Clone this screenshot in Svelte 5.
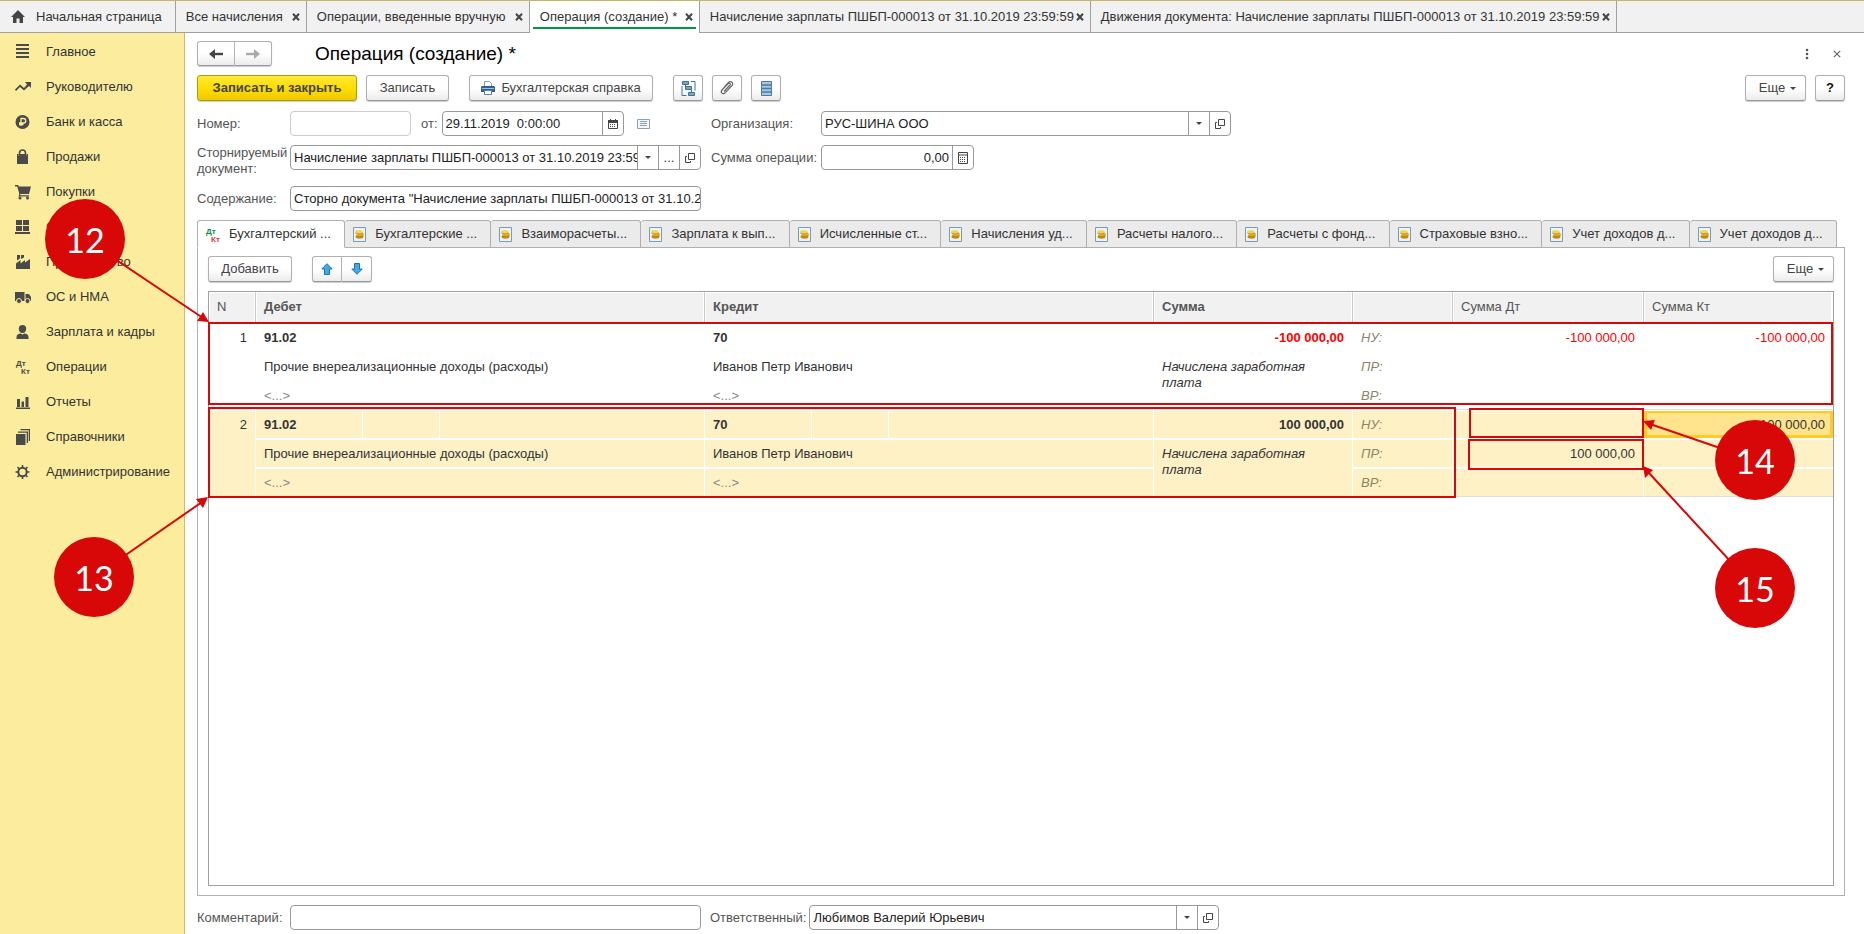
<script>
  const openTabs = [
    { title: 'Все начисления', width: 131 },
    { title: 'Операции, введенные вручную', width: 223 },
    { title: 'Операция (создание) *', width: 170, active: true },
    { title: 'Начисление зарплаты ПШБП-000013 от 31.10.2019 23:59:59', width: 391 },
    { title: 'Движения документа: Начисление зарплаты ПШБП-000013 от 31.10.2019 23:59:59', width: 526 },
  ];

  const sections = [
    { icon: 'menu', title: 'Главное' },
    { icon: 'trend', title: 'Руководителю' },
    { icon: 'ruble', title: 'Банк и касса' },
    { icon: 'bag', title: 'Продажи' },
    { icon: 'cart', title: 'Покупки' },
    { icon: 'boxes', title: 'Склад' },
    { icon: 'factory', title: 'Производство' },
    { icon: 'truck', title: 'ОС и НМА' },
    { icon: 'person', title: 'Зарплата и кадры' },
    { icon: 'dtkt', title: 'Операции' },
    { icon: 'chart', title: 'Отчеты' },
    { icon: 'books', title: 'Справочники' },
    { icon: 'gear', title: 'Администрирование' },
  ];

  const registers = [
    'Бухгалтерские ...',
    'Взаиморасчеты...',
    'Зарплата к вып...',
    'Исчисленные ст...',
    'Начисления уд...',
    'Расчеты налого...',
    'Расчеты с фонд...',
    'Страховые взно...',
    'Учет доходов д...',
    'Учет доходов д...',
  ];

  const entries = [
    {
      n: 1, debit: '91.02', credit: '70', sum: '-100 000,00', negative: true,
      nuDt: '-100 000,00', nuKt: '-100 000,00', prDt: '',
    },
    {
      n: 2, debit: '91.02', credit: '70', sum: '100 000,00', selected: true,
      nuDt: '', nuKt: '100 000,00', prDt: '100 000,00',
    },
  ];
</script>

{#snippet sectionIcon(name)}
  <svg class="section-icon" width="18" height="16" viewBox="0 0 18 16" aria-hidden="true">
    {#if name === 'menu'}
      <path d="M2 0h13v2H2zM2 4h13v2H2zM2 8h13v2H2zM2 12h13v2H2z" />
    {:else if name === 'trend'}
      <path d="M11 3h6v6l-2-2-5 4.500-4-3.500-4 4-1-1.500 5-5 4 3.500 3-3.500z" />
    {:else if name === 'ruble'}
      <circle cx="8.500" cy="8" r="7" />
      <path class="cut" d="M7 12V4.500h2.500a2.200 2.200 0 0 1 0 4.500H5M5 10.500h4.500" />
    {:else if name === 'bag'}
      <path d="M3 5h1.500v2H6V5h5v2h1.500V5H14v10H3z" />
      <path class="line" d="M5.500 7V4a3 3 0 0 1 6 0v3" />
    {:else if name === 'cart'}
      <path d="M1 1h3.200l.6 1.500H17L15 10H6.500l-.3 1.200H15v1.300H4.500L5.300 10 3.300 2.500H1z" />
      <circle cx="6" cy="14" r="1.500" /><circle cx="13.500" cy="14" r="1.500" />
    {:else if name === 'boxes'}
      <path d="M2 1h6v5H2zM9 1h6v5H9zM2 7h6v5H2zM9 7h6v5H9zM1 13h15v2H1z" />
    {:else if name === 'factory'}
      <path d="M2 15V9.500L6.500 6v3.500L11 6v2.500L16 5v10zM3 1h3v3.500L3 6.500zM7 1h3v2.500L7 5z" />
    {:else if name === 'truck'}
      <path d="M1 3h9.500v9H1zM11.500 5h3.500l2 3v4h-5.500z" />
      <circle cx="5" cy="12" r="2.500" class="wheel" /><circle cx="13.500" cy="12" r="2.500" class="wheel" />
    {:else if name === 'person'}
      <path d="M8.500 1a3.700 3.700 0 0 1 3.700 3.700c0 2-1.200 4.300-3.700 4.300S4.800 6.700 4.800 4.700A3.700 3.700 0 0 1 8.500 1zM2.500 15v-2c0-2 2-3.500 4-3.500l2 1 2-1c2 0 4 1.500 4 3.500v2z" />
    {:else if name === 'dtkt'}
      <text x="2" y="7">Дт</text><text x="7" y="15">Кт</text>
    {:else if name === 'chart'}
      <path d="M3 5h3v8H3zM7.500 7.500h2.500V13H7.500zM11.500 3h3v10h-3zM2 13.500h14V15H2z" />
    {:else if name === 'books'}
      <path d="M2 5h9.500v11H2zM4 2.500h10V14h-1.300V3.800H4zM6.500 0H16v12h-1.300V1.200H6.500z" />
    {:else}
      <circle cx="8.500" cy="8" r="4.200" class="ring" />
      <path class="line" d="M8.500 1v3M8.500 12v3M1.500 8h3M12.500 8h3M3.500 3l2.200 2.200M11.300 10.800l2.200 2.200M3.500 13l2.200-2.200M11.300 5.200L13.500 3" />
    {/if}
  </svg>
{/snippet}

{#snippet openIcon()}
  <svg width="10" height="10" viewBox="0 0 10 10" aria-hidden="true">
    <path fill="none" stroke="#444" d="M3.500.5h6v6h-6zM2 3.500H.5v6h5V8" />
  </svg>
{/snippet}

{#snippet registerIcon()}
  <svg width="13" height="15" viewBox="0 0 13 15" aria-hidden="true">
    <path fill="#eaf4fb" stroke="#7d9ab0" d="M.5.500h12v14H.5z" />
    <ellipse cx="6.500" cy="9.800" rx="4" ry="1.900" fill="#c98a10" />
    <ellipse cx="7.300" cy="7.400" rx="3.700" ry="1.900" fill="#e8b42a" />
    <ellipse cx="5.800" cy="5" rx="3.800" ry="1.900" fill="#f8d454" />
    <path fill="none" stroke="#a87410" stroke-width=".7" d="M3.200 8.600c2 1.200 5 1 7.200-.4M2.500 6c1.500 1.300 4.800 1.200 7 0" />
  </svg>
{/snippet}

<div class="app">
  <nav class="windows" aria-label="Открытые окна">
    <button class="window home">
      <svg width="14" height="13" viewBox="0 0 14 13" aria-hidden="true">
        <path fill="#444" d="M7 0l7 7h-2v6H8.500V8.500h-3V13H2V7H0z" />
      </svg>
      Начальная страница
    </button>
    {#each openTabs as tab}
      <div class="window" class:active={tab.active} style="width: {tab.width}px">
        <button class="window-title">{tab.title}</button>
        <button class="window-close" aria-label="Закрыть">
          <svg width="8" height="8" viewBox="0 0 8 8" aria-hidden="true">
            <path fill="none" stroke="#444" stroke-width="2" d="M1 .8l6 6.400M7 .8L1 7.200" />
          </svg>
        </button>
      </div>
    {/each}
  </nav>

  <div class="body">
    <nav class="sections" aria-label="Разделы">
      {#each sections as s}
        <a href="#{s.icon}">{@render sectionIcon(s.icon)}<span>{s.title}</span></a>
      {/each}
    </nav>

    <main>
      <header class="title-row">
        <div class="group">
          <button class="btn" aria-label="Назад">
            <svg width="14" height="10" viewBox="0 0 14 10" aria-hidden="true">
              <path fill="none" stroke="#444" stroke-width="2.400" d="M14 5H3" />
              <path fill="#444" d="M0 5l6-5v10z" />
            </svg>
          </button>
          <button class="btn" aria-label="Вперед">
            <svg width="14" height="10" viewBox="0 0 14 10" aria-hidden="true">
              <path fill="none" stroke="#aaa" stroke-width="2.400" d="M0 5h11" />
              <path fill="#aaa" d="M14 5L8 0v10z" />
            </svg>
          </button>
        </div>
        <h1>Операция (создание) *</h1>
        <div class="title-tools">
          <button class="plain" aria-label="Меню">
            <svg width="4" height="12" viewBox="0 0 4 12" aria-hidden="true">
              <circle cx="2" cy="2" r="1.300" /><circle cx="2" cy="6" r="1.300" /><circle cx="2" cy="10" r="1.300" />
            </svg>
          </button>
          <button class="plain" aria-label="Закрыть">
            <svg width="8" height="8" viewBox="0 0 8 8" aria-hidden="true">
              <path fill="none" stroke="#666" stroke-width="1.200" d="M.8.800l6.400 6.400M7.200.800L.8 7.200" />
            </svg>
          </button>
        </div>
      </header>

      <div class="commands">
        <button class="btn primary">Записать и закрыть</button>
        <button class="btn save">Записать</button>
        <button class="btn report">
          <svg width="14" height="14" viewBox="0 0 14 14" aria-hidden="true">
            <path fill="#fff" stroke="#7f9bb5" d="M3.500 5.500v-5h5l2 2v3" />
            <path fill="#2f5f8c" d="M1 5h12l1 1v5H0V6z" />
            <path fill="#9fc0dc" d="M1 7h12v1H1z" />
            <path fill="#fff" stroke="#5b7f9f" d="M3.500 9.500h7v4h-7z" />
          </svg>
          Бухгалтерская справка
        </button>
        <button class="btn icon" aria-label="Структура подчиненности">
          <svg width="15" height="15" viewBox="0 0 15 15" aria-hidden="true">
            <path fill="#7ba5c6" stroke="#3f7299" d="M1.500.500h6v3h-6zM4.500 5.500h6v3h-6zM7.500 11.500h6v3h-6z" />
            <path fill="none" stroke="#3f7299" d="M10 .500h4v9M1 5v9.500h4.500M4.500 4v3M10.500 9v2" />
          </svg>
        </button>
        <button class="btn icon" aria-label="Присоединенные файлы">
          <svg width="14" height="14" viewBox="0 0 14 14" aria-hidden="true">
            <path fill="none" stroke="#666" stroke-width="1.200" d="M4 10.500l6-6.500c1-1.200-.7-2.700-1.800-1.500L2 9c-2 2.300 1 5 3 2.800l7-7.300c2.200-2.500-1.500-5-3.500-3L4.500 6" />
          </svg>
        </button>
        <button class="btn icon" aria-label="Список">
          <svg width="11" height="15" viewBox="0 0 11 15" aria-hidden="true">
            <path fill="#a9c6dc" stroke="#4b7ba1" d="M.5.500h10v14H.5z" />
            <path stroke="#4b7ba1" stroke-width="1.500" d="M1 4h9M1 7.500h9M1 11h9" />
          </svg>
        </button>
        <button class="btn more">Еще <i class="caret"></i></button>
        <button class="btn help">?</button>
      </div>

      <div class="form">
        <label for="number">Номер:</label>
        <div class="cell number-cell">
          <div class="combo faded number"><input id="number" value="" /></div>
          <label for="date">от:</label>
          <div class="combo date">
            <input id="date" value="29.11.2019  0:00:00" />
            <button aria-label="Выбрать дату">
              <svg width="10" height="10" viewBox="0 0 10 10" aria-hidden="true">
                <path fill="#444" d="M0 1h2V0h1v1h4V0h1v1h2v3H0z" />
                <path fill="none" stroke="#444" d="M.5 3v6.500h9V3" />
                <path stroke="#444" stroke-dasharray="1 1" d="M2 5.500h6M2 7.500h6" />
              </svg>
            </button>
          </div>
          <svg width="13" height="10" viewBox="0 0 13 10" aria-hidden="true">
            <path fill="#f3f7fa" stroke="#8ca0b0" d="M.5.500h12v9H.5z" />
            <path stroke="#8ca0b0" d="M3 2.500h7M3 4.500h7M3 6.500h7" />
          </svg>
        </div>
        <label for="org">Организация:</label>
        <div class="combo org">
          <input id="org" value="РУС-ШИНА ООО" />
          <button aria-label="Выбрать"><i class="caret"></i></button>
          <button aria-label="Открыть">{@render openIcon()}</button>
        </div>

        <label for="storno" class="two-line">Сторнируемый документ:</label>
        <div class="combo">
          <input id="storno" value="Начисление зарплаты ПШБП-000013 от 31.10.2019 23:59" />
          <button aria-label="Выбрать"><i class="caret"></i></button>
          <button aria-label="Подобрать">...</button>
          <button aria-label="Открыть">{@render openIcon()}</button>
        </div>
        <label for="sum">Сумма операции:</label>
        <div class="combo sum">
          <input id="sum" value="0,00" />
          <button aria-label="Калькулятор">
            <svg width="10" height="12" viewBox="0 0 10 12" aria-hidden="true">
              <path fill="none" stroke="#444" d="M.5.500h9v11h-9zM1 3h8" />
              <path stroke="#444" stroke-dasharray="1 1" d="M2 5.500h6M2 7.500h6M2 9.500h6" />
            </svg>
          </button>
        </div>

        <label for="content">Содержание:</label>
        <div class="combo">
          <input id="content" value="Сторно документа &quot;Начисление зарплаты ПШБП-000013 от 31.10.2019 23:59:59&quot;" />
        </div>
      </div>

      <div class="registers" role="tablist">
        <button role="tab" aria-selected="true" class="register current">
          <svg width="16" height="15" viewBox="0 0 16 15" aria-hidden="true">
            <text x="0" y="7" fill="#0a8f3f">Дт</text><text x="5" y="15" fill="#d9403c">Кт</text>
          </svg>
          <span>Бухгалтерский ...</span>
        </button>
        {#each registers as r}
          <button role="tab" aria-selected="false" class="register">{@render registerIcon()}<span>{r}</span></button>
        {/each}
      </div>

      <section class="panel">
        <div class="panel-commands">
          <button class="btn add">Добавить</button>
          <div class="group arrows">
            <button class="btn" aria-label="Переместить вверх">
              <svg width="12" height="12" viewBox="0 0 12 12" aria-hidden="true">
                <path fill="#3fa9ec" stroke="#1f74ad" d="M6 .7l5.200 5.300H8.500v5.500h-5V6H.8z" />
              </svg>
            </button>
            <button class="btn" aria-label="Переместить вниз">
              <svg width="12" height="12" viewBox="0 0 12 12" aria-hidden="true">
                <path fill="#3fa9ec" stroke="#1f74ad" d="M6 11.300L.8 6h2.700V.5h5V6h2.700z" />
              </svg>
            </button>
          </div>
          <button class="btn more">Еще <i class="caret"></i></button>
        </div>

        <div class="grid-box">
          <table>
            <colgroup>
              <col class="c-n" />
              <col class="c-a" /><col class="c-b" /><col />
              <col class="c-a" /><col class="c-b" /><col />
              <col class="c-sum" /><col class="c-kind" /><col class="c-dt" /><col class="c-kt" />
            </colgroup>
            <thead>
              <tr>
                <th class="light">N</th>
                <th colspan="3">Дебет</th>
                <th colspan="3">Кредит</th>
                <th>Сумма</th>
                <th></th>
                <th class="light">Сумма Дт</th>
                <th class="light">Сумма Кт</th>
              </tr>
            </thead>
            {#each entries as e}
              <tbody class:selected={e.selected} class:negative={e.negative}>
                <tr>
                  <td rowspan="3" class="num top last">
                    <span>{e.n}</span>
                    <i class="frame {e.selected ? 'frame-entry' : 'frame-storno'}"></i>
                  </td>
                  <td class="bold">{e.debit}</td><td></td><td></td>
                  <td class="bold">{e.credit}</td><td></td><td></td>
                  <td class="bold num amount">{e.sum}</td>
                  <td class="kind">НУ:</td>
                  <td class="num amount host">{e.nuDt}{#if e.selected}<i class="frame frame-nu"></i>{/if}</td>
                  <td class="num amount" class:focused={e.selected}>{e.nuKt}</td>
                </tr>
                <tr>
                  <td colspan="3">Прочие внереализационные доходы (расходы)</td>
                  <td colspan="3">Иванов Петр Иванович</td>
                  <td rowspan="2" class="note top last">Начислена заработная плата</td>
                  <td class="kind">ПР:</td>
                  <td class="num host">{e.prDt}{#if e.selected}<i class="frame frame-pr"></i>{/if}</td>
                  <td></td>
                </tr>
                <tr>
                  <td colspan="3" class="blank last">&lt;...&gt;</td>
                  <td colspan="3" class="blank last">&lt;...&gt;</td>
                  <td class="kind last">ВР:</td>
                  <td class="last"></td>
                  <td class="last"></td>
                </tr>
              </tbody>
            {/each}
          </table>
        </div>
      </section>

      <footer>
        <label for="comment">Комментарий:</label>
        <div class="combo comment"><input id="comment" value="" /></div>
        <label for="owner">Ответственный:</label>
        <div class="combo owner">
          <input id="owner" value="Любимов Валерий Юрьевич" />
          <button aria-label="Выбрать"><i class="caret"></i></button>
          <button aria-label="Открыть">{@render openIcon()}</button>
        </div>
      </footer>
    </main>
  </div>

  <svg class="callouts at-left" width="220" height="640" viewBox="0 0 220 640" aria-hidden="true">
    <path class="stem" d="M85 239L203 318M94 577L202 502" />
    <path d="M209 322l-12-1 6-9zM208 497l-5 11-7-9z" />
    <circle cx="85" cy="239" r="40" /><text x="85" y="253">12</text>
    <circle cx="94" cy="577" r="40" /><text x="94" y="591">13</text>
  </svg>
  <svg class="callouts at-right" width="224" height="640" viewBox="1640 0 224 640" aria-hidden="true">
    <path class="stem" d="M1755 460L1650 424M1755 588L1649 473" />
    <path d="M1643 421l12-1-4 10zM1643 466l10 4-8 8z" />
    <circle cx="1755" cy="460" r="40" /><text x="1755" y="474">14</text>
    <circle cx="1755" cy="588" r="40" /><text x="1755" y="602">15</text>
  </svg>
</div>

<style>
  :global(body) { margin: 0; background: #fff; }
  .app {
    position: relative;
    display: flex;
    flex-direction: column;
    min-height: 100vh;
    font: 13px/16px "Liberation Sans", Arial, sans-serif;
    color: #333;
  }
  button, input { font: inherit; color: inherit; margin: 0; padding: 0; }
  button { background: none; border: 0; white-space: nowrap; }
  svg { flex: none; display: block; }

  .windows {
    display: flex;
    height: 31px;
    background: #f1f1f1;
    border-top: 1px solid #c9b568;
    border-bottom: 1px solid #a0a0a0;
  }
  .window {
    display: flex;
    align-items: center;
    justify-content: space-between;
    box-sizing: border-box;
    padding: 0 6px 0 10px;
    border-right: 1px solid #a0a0a0;
  }
  .home { gap: 11px; padding: 0 13px 0 11px; }
  .window.active {
    background: linear-gradient(#009646, #009646) center 26px / calc(100% - 6px) 2px no-repeat, #fff;
    margin-bottom: -1px;
  }

  .body { display: flex; flex: 1; }
  .sections {
    width: 184px;
    flex: none;
    padding-top: 1px;
    background: #fbec9e;
    border-right: 1px solid #cdbd74;
  }
  .sections a {
    display: flex;
    align-items: center;
    gap: 14px;
    height: 35px;
    padding-left: 14px;
    color: #333;
    text-decoration: none;
  }
  .section-icon { fill: #4a4a4a; }
  .section-icon .cut { fill: none; stroke: #fbec9e; stroke-width: 1.300; }
  .section-icon .line { fill: none; stroke: #4a4a4a; stroke-width: 1.600; }
  .section-icon .ring { fill: none; stroke: #4a4a4a; stroke-width: 2; }
  .section-icon .wheel { stroke: #fbec9e; stroke-width: 1; }
  .section-icon text, .register text { font-size: 8px; font-weight: bold; }

  main {
    display: flex;
    flex-direction: column;
    flex: 1;
    min-width: 0;
    padding: 8px 19px 4px 12px;
  }
  .title-row { display: flex; align-items: center; height: 25px; }
  h1 { margin: 0 auto 0 43px; font-size: 19px; line-height: 24px; font-weight: normal; color: #000; }
  .title-tools { display: flex; gap: 24px; padding-right: 4px; fill: #555; }

  .btn {
    display: flex;
    align-items: center;
    justify-content: center;
    box-sizing: border-box;
    height: 26px;
    border: 1px solid #b0b0b0;
    border-bottom-color: #999;
    border-radius: 3px;
    background: linear-gradient(#fff 50%, #ececec);
    box-shadow: 0 1px 1px #ccc;
    color: #444;
  }
  .group { display: flex; }
  .group .btn { width: 37px; height: 25px; }
  .group .btn:first-child { width: 38px; border-radius: 3px 0 0 3px; }
  .group .btn:last-child { border-left: 0; border-radius: 0 3px 3px 0; }
  .arrows .btn, .arrows .btn:first-child { width: 30px; height: 26px; }

  .commands { display: flex; margin-top: 9px; }
  .primary {
    width: 160px;
    border-color: #b39b00;
    background: linear-gradient(#ffe83a, #ffde00 50%, #ecca00);
    font-weight: bold;
  }
  .save { width: 83px; margin-left: 9px; }
  .report { width: 184px; margin: 0 11px 0 20px; gap: 6px; }
  .icon { width: 30px; margin-left: 9px; }
  .more { width: 61px; margin-left: auto; gap: 5px; padding-left: 4px; }
  .help { width: 30px; margin-left: 9px; color: #111; font-weight: bold; }
  .caret { border: 3px solid transparent; border-top-color: #444; border-bottom: 0; }

  .form {
    display: grid;
    grid-template-columns: 93px 411px 100px 1fr;
    grid-template-rows: 25px 32px 25px;
    row-gap: 9px;
    margin-top: 10px;
    align-items: start;
  }
  .form > label { line-height: 25px; color: #555; white-space: nowrap; }
  .form > label:nth-of-type(even) { margin-left: 10px; }
  .form > label.two-line { line-height: 16px; white-space: normal; margin-left: 0; }
  .cell { display: flex; align-items: center; }
  .cell label { margin: 0 4px 0 10px; color: #555; }
  .cell > svg { margin-left: 13px; }
  .combo {
    display: flex;
    box-sizing: border-box;
    height: 25px;
    border: 1px solid #999;
    border-radius: 4px;
    background: #fff;
  }
  .faded { border-color: #ccc; }
  .combo input {
    flex: 1;
    min-width: 0;
    padding: 0 0 0 3px;
    border: 0;
    background: none;
    outline: 0;
    color: #222;
    white-space: pre;
  }
  .combo button {
    display: flex;
    align-items: center;
    justify-content: center;
    width: 21px;
    border-left: 1px solid #999;
    box-sizing: border-box;
    flex: none;
  }
  .number { width: 121px; }
  .date { width: 182px; }
  .org { width: 410px; margin-left: 20px; }
  .sum { width: 153px; margin-left: 20px; }
  .sum input { text-align: right; padding-right: 3px; }

  .registers { display: flex; position: relative; z-index: 1; margin: 9px 8px 0 0; }
  .register {
    display: flex;
    flex: 1 1 auto;
    align-items: center;
    gap: 9px;
    box-sizing: border-box;
    height: 28px;
    padding-left: 8px;
    border: 1px solid #b0b0b0;
    border-left-width: 0;
    border-radius: 3px 3px 0 0;
    background: #ebebeb;
    line-height: 24px;
  }
  .current { gap: 7px; border-left-width: 1px; border-bottom-color: #fff; background: #fff; }

  .panel {
    display: flex;
    flex-direction: column;
    flex: 1;
    margin-top: -1px;
    padding: 8px 10px 9px;
    border: 1px solid #b0b0b0;
  }
  .panel-commands { display: flex; }
  .add { width: 84px; margin-right: 20px; }
  .grid-box { flex: 1; margin-top: 9px; border: 1px solid #a0a0a0; }

  table { width: 100%; table-layout: fixed; border-spacing: 0; }
  .c-n { width: 47px; }
  .c-a { width: 107px; }
  .c-b { width: 77px; }
  .c-sum { width: 199px; }
  .c-kind { width: 100px; }
  .c-dt { width: 191px; }
  .c-kt { width: 189px; }
  th, td { box-sizing: border-box; padding: 2px 8px 0; text-align: left; }
  th {
    height: 31px;
    padding: 0 8px 2px;
    border: 1px solid #fff;
    border-right-color: #c8c8c8;
    border-left-width: 0;
    background: #f1f1f1;
    color: #555;
    box-shadow: inset 1px 0 #fff, inset -1px 0 #fff;
  }
  th:last-child { border-right-color: #fff; }
  .light { font-weight: normal; }
  tbody { position: relative; }
  td {
    height: 29px;
    border-right: 1px solid #fff;
    border-bottom: 1px solid #fff;
    white-space: nowrap;
  }
  td.last { border-bottom-color: #ddd; }
  td:last-child { border-right: 0; }
  .top { vertical-align: top; padding-top: 7px; }
  .num { text-align: right; }
  .bold { font-weight: bold; }
  .kind { color: #8a8468; font-style: italic; }
  .note { font-style: italic; white-space: normal; padding-right: 40px; }
  .blank { color: #888; }
  .negative .amount { color: #f00; }
  .selected td { background: #fef1c6; box-shadow: inset 0 1px #fff; }
  .selected td.focused { background: #ffe48d; box-shadow: inset 0 1px #fff, inset 0 0 0 3px #ffc926; }
  .host { position: relative; }

  .frame { position: absolute; z-index: 1; box-sizing: border-box; border: 2px solid #d90808; }
  .frame-storno { inset: -1px 0 5px -1px; }
  .frame-entry { inset: -3px 377px -1px -1px; }
  .frame-nu { inset: -2px -1px 0 16px; }
  .frame-pr { inset: 0 -1px -3px 15px; }

  footer { display: flex; align-items: center; margin-top: 9px; color: #555; }
  footer label:first-child { width: 93px; }
  .comment { width: 411px; margin-right: 9px; }
  .owner { width: 410px; margin-left: 3px; }

  .callouts { position: absolute; top: 0; z-index: 2; pointer-events: none; fill: #d90808; }
  .at-left { left: 0; }
  .at-right { right: 0; }
  .stem { stroke: #d90808; stroke-width: 2; }
  .callouts text { fill: #fff; font: 34px Lato, sans-serif; text-anchor: middle; }
</style>
